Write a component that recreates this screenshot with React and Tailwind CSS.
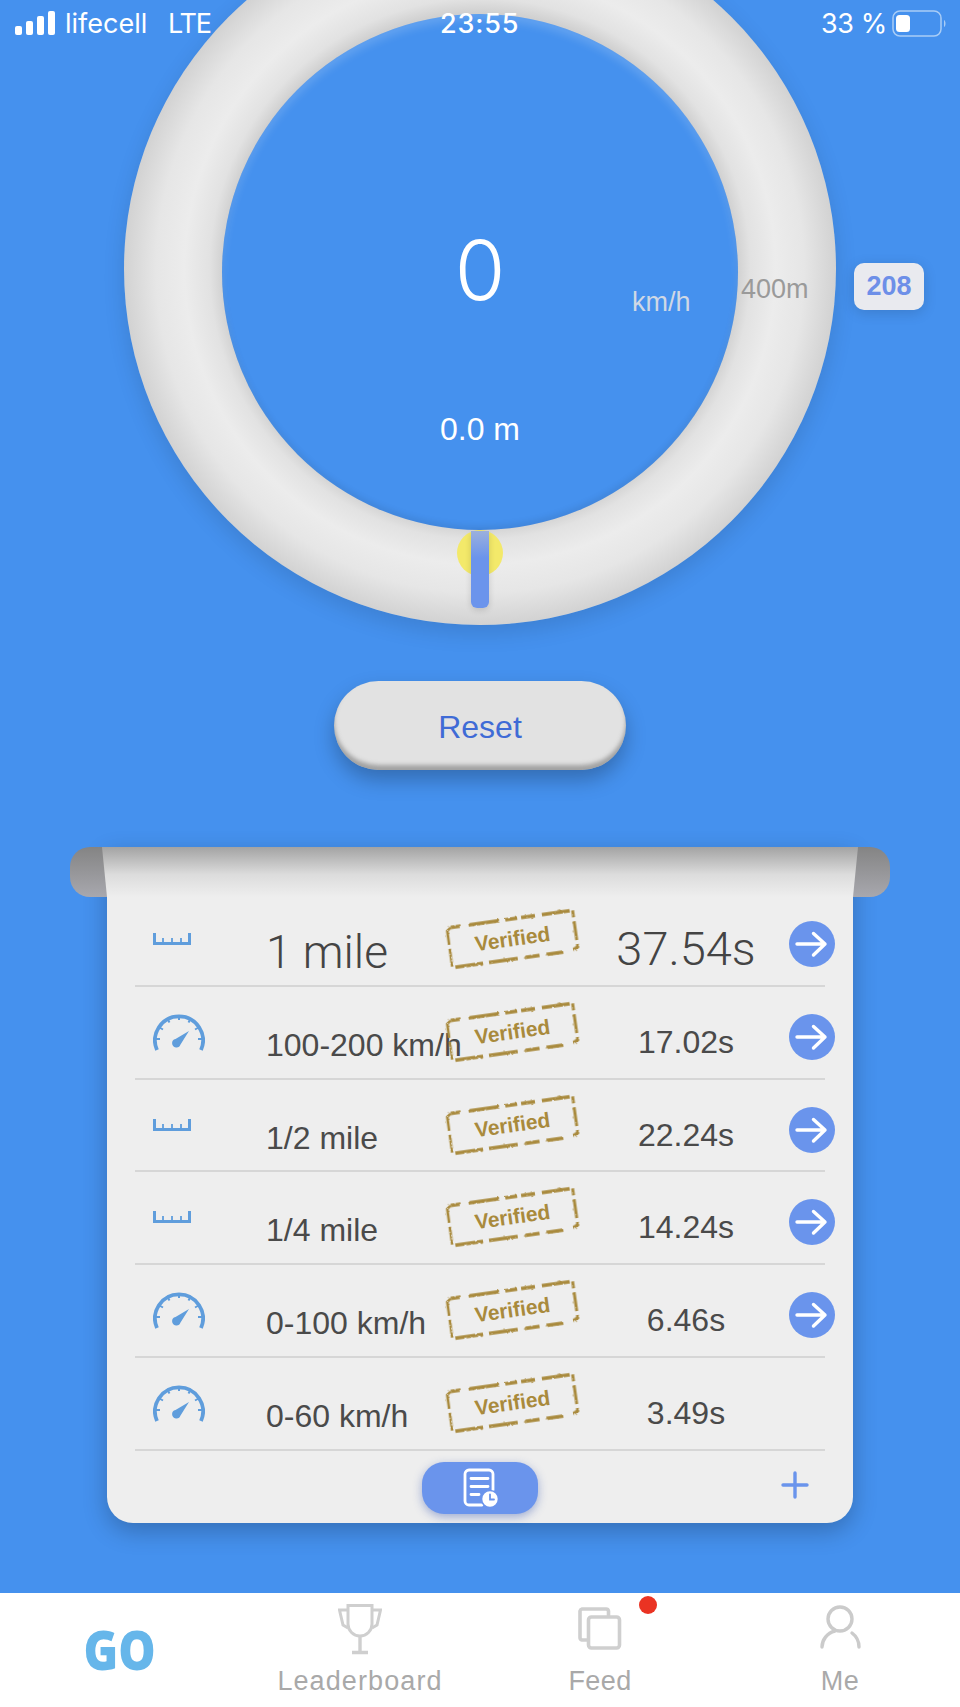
const ROWS = [
  { icon: 'ruler', label: '1 mile', time: '37.54s', big: true, arrow: true },
  { icon: 'gauge', label: '100-200 km/h', time: '17.02s', arrow: true },
  { icon: 'ruler', label: '1/2 mile', time: '22.24s', arrow: true },
  { icon: 'ruler', label: '1/4 mile', time: '14.24s', arrow: true },
  { icon: 'gauge', label: '0-100 km/h', time: '6.46s', arrow: true },
  { icon: 'gauge', label: '0-60 km/h', time: '3.49s', arrow: false },
];

function StatusBar() {
  return (
    <div className="absolute left-0 right-0 top-0 z-20 h-[46px] font-['Inter',sans-serif] text-[27px] leading-[30px] text-white">
      <svg className="absolute left-[15px] top-[11px]" width="41" height="25" viewBox="0 0 41 25" fill="#fff">
        <rect x="0" y="15" width="7" height="9" rx="2" />
        <rect x="11" y="10" width="7" height="14" rx="2" />
        <rect x="22" y="5" width="7" height="19" rx="2" />
        <rect x="33" y="0" width="7" height="24" rx="2" />
      </svg>
      <span className="absolute left-[65px] top-[9px]">lifecell</span>
      <span className="absolute left-[168px] top-[9px] tracking-[-1.2px]">LTE</span>
      <span className="absolute left-[440px] top-[9px] font-medium tracking-[0.8px]">23:55</span>
      <span className="absolute left-[821px] top-[9px] tracking-[-0.4px]">33 %</span>
      <svg className="absolute left-[892px] top-[10px]" width="56" height="27" viewBox="0 0 56 27">
        <rect x="1" y="1" width="48" height="25" rx="7" fill="none" stroke="#a9cdf6" strokeWidth="1.5" />
        <rect x="4" y="5" width="14" height="17" rx="3.5" fill="#fff" />
        <path d="M52 10 C54 11 54 16 52 17 Z" fill="#a9cdf6" />
      </svg>
    </div>
  );
}

function Dial() {
  return (
    <div className="relative mx-auto -mt-[87px] flex h-[712px] w-[712px] shrink-0 items-center justify-center rounded-full bg-[radial-gradient(closest-side,#d0d0d0_72%,#e2e2e2_76%,#ececec_83%,#e6e6e6_91%,#d2d2d2_100%)] shadow-[0_8px_22px_rgba(0,0,0,0.12)]">
      <div className="mt-[6px] flex h-[516px] w-[516px] flex-col items-center rounded-full bg-[#4591ee] pt-[216px] text-white shadow-[inset_0_6px_8px_rgba(255,255,255,0.16),inset_0_-4px_6px_rgba(0,0,0,0.08)]">
        <div className="font-['Inter',sans-serif] text-[82px] font-light leading-[82px]">0</div>
        <div className="mt-[99px] font-['Liberation_Sans',sans-serif] text-[32px] leading-[36px]">0.0 m</div>
      </div>
      <span className="absolute left-[508px] top-[374px] font-['Liberation_Sans',sans-serif] text-[27px] leading-[30px] text-[#cfd8e5]">km/h</span>
      <span className="absolute left-[617px] top-[361px] font-['Liberation_Sans',sans-serif] text-[27px] leading-[30px] text-[#9a9a9a]">400m</span>
      <div className="absolute left-[730px] top-[350px] flex h-[47px] w-[70px] items-center justify-center rounded-[10px] bg-[#e9eaef] font-['Liberation_Sans',sans-serif] text-[27px] font-bold text-[#6d8fe8] shadow-[0_3px_14px_rgba(0,0,0,0.14)]">
        208
      </div>
      <div className="absolute left-[333px] top-[617px] h-[46px] w-[46px] rounded-full bg-[#f3e96a]" />
      <div className="absolute left-[347px] top-[618px] h-[77px] w-[18px] rounded-b-[6px] bg-[linear-gradient(180deg,#9bb0dd_0%,#6b94ec_35%)] shadow-[0_2px_6px_rgba(0,0,0,0.15)]" />
    </div>
  );
}

function RulerIcon() {
  return (
    <svg width="38" height="12" viewBox="0 0 38 12" fill="none" stroke="#5f9ddc" className="mt-[39px]">
      <path d="M1.5 0 V10.5 H36.5 V0" strokeWidth="3" />
      <path d="M10 11 V5 M19 11 V5 M28 11 V5" strokeWidth="1.8" />
    </svg>
  );
}

function GaugeIcon() {
  return (
    <svg width="52" height="38" viewBox="0 0 52 38" fill="none" stroke="#5f9ddc" className="mt-[26px]">
      <path d="M4 37 A 24 24 0 1 1 48 37" strokeWidth="3.8" />
      <path d="M26 2 V7 M14 5 L16.5 9.5 M38 5 L35.5 9.5 M5.5 14 L10 16.5 M46.5 14 L42 16.5 M2 26 H7 M50 26 H45" strokeWidth="2" />
      <path d="M36 18 L27.5 31.5 A 4.3 4.3 0 1 1 22.5 26 Z" fill="#5f9ddc" stroke="none" />
    </svg>
  );
}

function Stamp() {
  return (
    <div className="relative mt-[24px] flex h-[42px] w-[129px] shrink-0 -rotate-[8deg] items-center justify-center font-['Liberation_Sans',sans-serif] text-[21px] font-bold text-[#a98a3c]">
      <svg className="absolute -left-[2px] -top-[2px]" width="133" height="46" viewBox="0 0 133 46" fill="none" stroke="#a98a3c" strokeLinecap="butt">
        <filter id="rough" x="-5%" y="-20%" width="110%" height="140%">
          <feTurbulence type="fractalNoise" baseFrequency="0.35" numOctaves="2" seed="4" />
          <feDisplacementMap in="SourceGraphic" scale="2.5" />
        </filter>
        <g filter="url(#rough)">
          <path d="M7 3 H17 M25 3 H56 M62 3 H74 M78 3 H92 M99 3 H127" strokeWidth="3.6" />
          <path d="M130 3 V10 M130 14 V33 M130 37 V40 L125 42" strokeWidth="3" />
          <path d="M115 43 H98 M91 43 H76 M69 43 H40 M34 43 H6" strokeWidth="3.6" />
          <path d="M3 42 V24 M3 20 V6 L7 3" strokeWidth="2.6" />
        </g>
      </svg>
      <span className="relative">Verified</span>
    </div>
  );
}

function ArrowButton() {
  return (
    <div className="mt-[27px] flex h-[46px] w-[46px] shrink-0 items-center justify-center rounded-full bg-[#6a94ec]">
      <svg width="46" height="46" viewBox="0 0 46 46" fill="none" stroke="#fff" strokeWidth="3.4" strokeLinecap="round" strokeLinejoin="round">
        <path d="M8 23 H36 M24.5 12.5 L36 23 L24.5 34" />
      </svg>
    </div>
  );
}

function Row({ row }) {
  return (
    <div className="flex h-[92.8px] items-start border-b-2 border-[#d6d6d6]">
      <div className="w-[131px] shrink-0 pl-[18px]">
        {row.icon === 'ruler' ? <RulerIcon /> : <GaugeIcon />}
      </div>
      {row.big ? (
        <div className="mt-[32px] w-[182px] shrink-0 whitespace-nowrap font-['Roboto',sans-serif] text-[46px] font-light leading-[52px] text-[#444]">
          {row.label}
        </div>
      ) : (
        <div className="mt-[38px] w-[182px] shrink-0 whitespace-nowrap font-['Liberation_Sans',sans-serif] text-[32px] leading-[40px] text-[#4a4a4a]">
          {row.label}
        </div>
      )}
      <Stamp />
      {row.big ? (
        <div className="mt-[28px] w-[212px] shrink-0 pl-[6px] text-center font-['Roboto',sans-serif] text-[47px] font-light leading-[54px] text-[#444]">
          {row.time}
        </div>
      ) : (
        <div className="mt-[35px] w-[212px] shrink-0 pl-[6px] text-center font-['Liberation_Sans',sans-serif] text-[32px] leading-[40px] text-[#4a4a4a]">
          {row.time}
        </div>
      )}
      {row.arrow && <ArrowButton />}
    </div>
  );
}

function Paper() {
  return (
    <div className="relative mx-auto mt-[77px] h-[676px] w-[746px] shrink-0 rounded-b-[26px] bg-[#eeeeee] px-[28px] pt-[47px] shadow-[0_8px_24px_rgba(0,0,0,0.24)]">
      <div className="absolute -left-[37px] top-0 h-[50px] w-[42px] rounded-l-[20px] bg-[linear-gradient(180deg,#848484,#a8a8ae)]" />
      <div className="absolute -right-[37px] top-0 h-[50px] w-[42px] rounded-r-[20px] bg-[linear-gradient(180deg,#848484,#a8a8ae)]" />
      <div className="absolute -left-[5px] top-0 h-[50px] w-[756px] bg-[linear-gradient(180deg,#a3a3a3_0%,#dcdcdc_55%,#eeeeee_100%)] [clip-path:polygon(0_0,100%_0,751px_100%,5px_100%)]" />
      <div className="relative">
        {ROWS.map((row) => (
          <Row key={row.label} row={row} />
        ))}
        <div className="grid grid-cols-[1fr_116px_1fr] pt-[11px]">
          <div />
          <div className="flex h-[52px] items-center justify-center rounded-[22px] bg-[#6a94ec] shadow-[0_3px_10px_rgba(60,90,180,0.45)]">
            <svg width="36" height="40" viewBox="0 0 36 40" fill="none" stroke="#fff" strokeWidth="2.8" strokeLinecap="round">
              <path d="M31 22 V6 A 4 4 0 0 0 27 2 H7 A 4 4 0 0 0 3 6 V33 A 4 4 0 0 0 7 37 H20" />
              <path d="M9 10.5 H26 M9 18.5 H26 M9 26.5 H17" />
              <circle cx="28" cy="31" r="8.5" fill="#fff" stroke="#6a94ec" strokeWidth="1.6" />
              <path d="M28 26.5 V31.5 H32" stroke="#6a94ec" strokeWidth="1.8" />
            </svg>
          </div>
          <div className="flex items-center justify-end pb-[6px] pr-[16px]">
            <svg width="28" height="28" viewBox="0 0 28 28" stroke="#6a94ec" strokeWidth="3.4" strokeLinecap="round">
              <path d="M14 2 V26 M2 14 H26" />
            </svg>
          </div>
        </div>
      </div>
    </div>
  );
}

function TabBar() {
  return (
    <div className="grid h-[114px] shrink-0 grid-cols-4 bg-white font-['Liberation_Sans',sans-serif] text-[27px] leading-[32px] tracking-[0.4px] text-[#a9a9a9]">
      <div className="flex items-center justify-center pb-[2px] font-['Open_Sans',sans-serif] text-[54px] font-extrabold tracking-normal text-[#66b6ea]">
        <span className="scale-x-[0.87]">GO</span>
      </div>
      <div className="flex flex-col items-center pt-[11px]">
        <svg width="44" height="51" viewBox="0 0 44 51" fill="none" stroke="#cfcfcf" strokeWidth="3">
          <path d="M10 1.5 H34 V20 A 12 12 0 0 1 10 20 Z" />
          <path d="M10 6 H1.5 L5 21 L10 24 M34 6 H42.5 L39 21 L34 24" />
          <path d="M22 32 V47 M14 48.5 H30" strokeWidth="3.4" />
        </svg>
        <span className="mt-[10px] tracking-[1.1px]">Leaderboard</span>
      </div>
      <div className="relative flex flex-col items-center pt-[14px]">
        <svg width="44" height="45" viewBox="0 0 44 45" fill="none" stroke="#cfcfcf" strokeWidth="3.6" strokeLinejoin="round">
          <path d="M9 33 H4 A 2.5 2.5 0 0 1 2 30.5 V4 A 2.5 2.5 0 0 1 4 2 H28 A 2.5 2.5 0 0 1 30.5 4 V9" />
          <rect x="10.5" y="10" width="31" height="31" rx="3" />
        </svg>
        <span className="mt-[13px]">Feed</span>
        <div className="absolute left-[159px] top-[3px] h-[18px] w-[18px] rounded-full bg-[#ea3323]" />
      </div>
      <div className="flex flex-col items-center pt-[11px]">
        <svg width="42" height="47" viewBox="0 0 42 47" fill="none" stroke="#cbcbcb" strokeWidth="3.4" strokeLinecap="round">
          <circle cx="21" cy="15" r="12" />
          <path d="M16 27 C8 29 3 36 3 43 M33 29 C37 32 40 37 40 43" />
        </svg>
        <span className="mt-[14px]">Me</span>
      </div>
    </div>
  );
}

export default function App() {
  return (
    <div className="relative flex h-[1707px] w-[960px] flex-col overflow-hidden bg-[#4591ee]">
      <StatusBar />
      <div className="min-h-0 flex-1">
        <Dial />
        <button
          type="button"
          className="mx-auto mt-[56px] block h-[89px] w-[292px] rounded-[45px] bg-[#e2e2e2] pt-[3px] font-['Liberation_Sans',sans-serif] text-[32px] text-[#3f6bd6] shadow-[0_10px_20px_rgba(0,0,0,0.25),inset_0_-5px_4px_rgba(110,110,110,0.55)]"
        >
          Reset
        </button>
        <Paper />
      </div>
      <TabBar />
    </div>
  );
}
